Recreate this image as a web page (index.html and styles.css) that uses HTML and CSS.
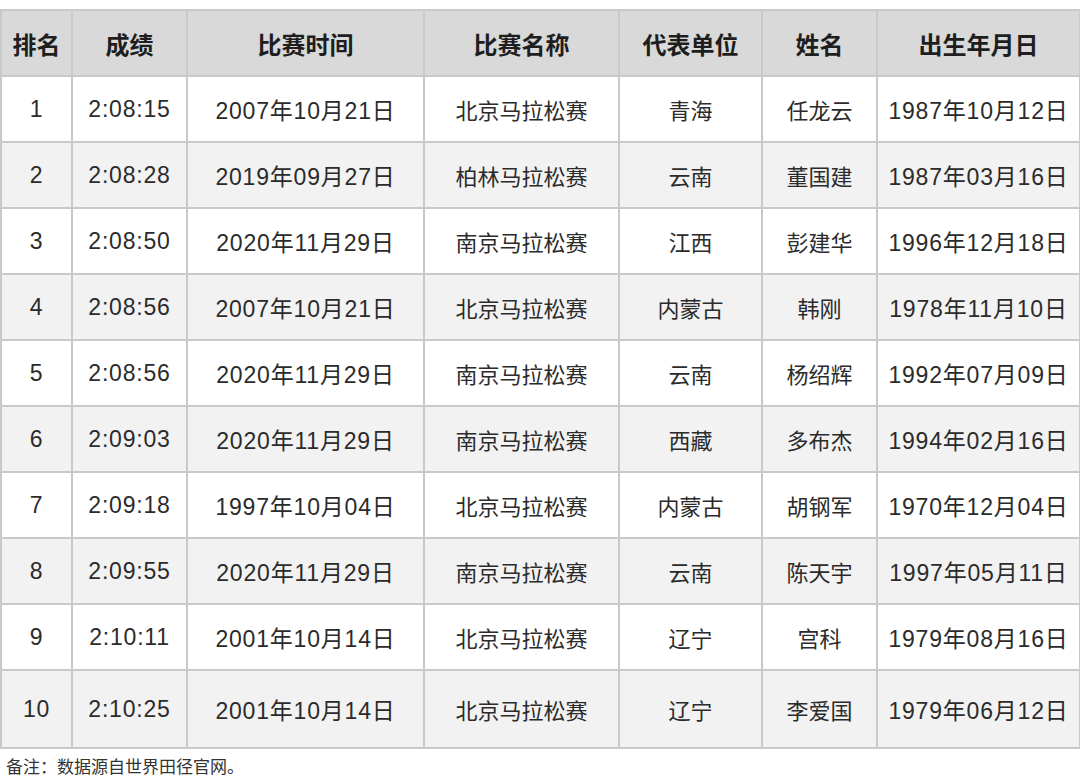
FILE: index.html
```html
<!DOCTYPE html>
<html lang="zh-CN">
<head>
<meta charset="utf-8">
<link rel="stylesheet" href="styles.css">
</head>
<body>
<table class="rank">
<colgroup>
<col class="c1"><col class="c2"><col class="c3"><col class="c4"><col class="c5"><col class="c6"><col class="c7">
</colgroup>
<thead>
<tr><th>排名</th><th>成绩</th><th>比赛时间</th><th>比赛名称</th><th>代表单位</th><th>姓名</th><th>出生年月日</th></tr>
</thead>
<tbody>
<tr><td>1</td><td>2:08:15</td><td>2007年10月21日</td><td>北京马拉松赛</td><td>青海</td><td>任龙云</td><td>1987年10月12日</td></tr>
<tr><td>2</td><td>2:08:28</td><td>2019年09月27日</td><td>柏林马拉松赛</td><td>云南</td><td>董国建</td><td>1987年03月16日</td></tr>
<tr><td>3</td><td>2:08:50</td><td>2020年11月29日</td><td>南京马拉松赛</td><td>江西</td><td>彭建华</td><td>1996年12月18日</td></tr>
<tr><td>4</td><td>2:08:56</td><td>2007年10月21日</td><td>北京马拉松赛</td><td>内蒙古</td><td>韩刚</td><td>1978年11月10日</td></tr>
<tr><td>5</td><td>2:08:56</td><td>2020年11月29日</td><td>南京马拉松赛</td><td>云南</td><td>杨绍辉</td><td>1992年07月09日</td></tr>
<tr><td>6</td><td>2:09:03</td><td>2020年11月29日</td><td>南京马拉松赛</td><td>西藏</td><td>多布杰</td><td>1994年02月16日</td></tr>
<tr><td>7</td><td>2:09:18</td><td>1997年10月04日</td><td>北京马拉松赛</td><td>内蒙古</td><td>胡钢军</td><td>1970年12月04日</td></tr>
<tr><td>8</td><td>2:09:55</td><td>2020年11月29日</td><td>南京马拉松赛</td><td>云南</td><td>陈天宇</td><td>1997年05月11日</td></tr>
<tr><td>9</td><td>2:10:11</td><td>2001年10月14日</td><td>北京马拉松赛</td><td>辽宁</td><td>宫科</td><td>1979年08月16日</td></tr>
<tr class="last"><td>10</td><td>2:10:25</td><td>2001年10月14日</td><td>北京马拉松赛</td><td>辽宁</td><td>李爱国</td><td>1979年06月12日</td></tr>
</tbody>
</table>
<p class="note">备注：数据源自世界田径官网。</p>
</body>
</html>
```
FILE: styles.css
```css
html, body {
  margin: 0;
  padding: 0;
  background: #ffffff;
}
body {
  font-family: "Liberation Sans", "Noto Sans CJK SC", sans-serif;
  color: #2b2b2b;
}
.rank {
  margin-top: 9px;
  width: 1079px;
  table-layout: fixed;
  border-collapse: collapse;
}
.c1 { width: 71px; }
.c2 { width: 115px; }
.c3 { width: 237px; }
.c4 { width: 195px; }
.c5 { width: 143px; }
.c6 { width: 115px; }
.c7 { width: 203px; }
.rank th, .rank td {
  border: 2px solid #c9c9c9;
  text-align: center;
  padding: 0;
  white-space: nowrap;
  height: 64px;
}
.rank th {
  background: #d9d9d9;
  font-family: "Noto Sans CJK SC", sans-serif;
  font-weight: 700;
  font-size: 24px;
  color: #1e1e1e;
}
.rank td {
  font-size: 23px;
  font-weight: 400;
  letter-spacing: 0.8px;
}
.rank td:nth-child(4),
.rank td:nth-child(5),
.rank td:nth-child(6) {
  font-size: 22px;
  letter-spacing: 0;
}
.rank tbody tr:nth-child(odd) td { background: #ffffff; }
.rank tbody tr:nth-child(even) td { background: #f2f2f2; }
.rank tr.last td { height: 76px; }
.note {
  margin: 4px 0 0 6px;
  font-family: "Noto Sans CJK SC", sans-serif;
  font-size: 17px;
  color: #333333;
}
```
